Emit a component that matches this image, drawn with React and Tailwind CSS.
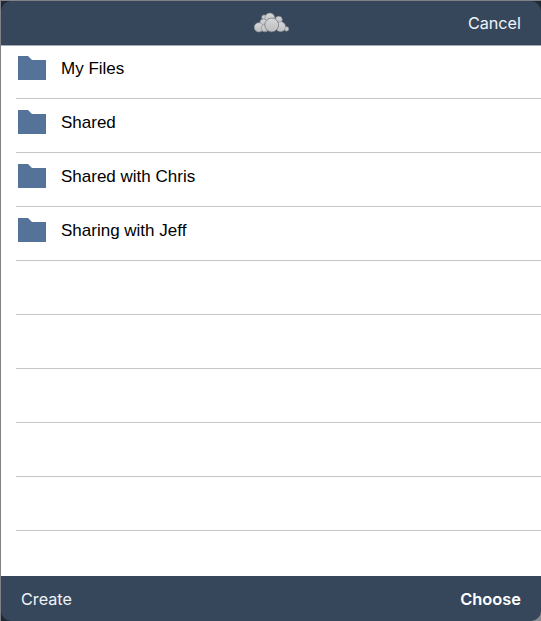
const folders = ['My Files', 'Shared', 'Shared with Chris', 'Sharing with Jeff'];
const emptyRows = [1, 2, 3, 4, 5];

function CloudLogo() {
  return (
    <svg width="35" height="22" viewBox="0.3 0 35.4 22" className="block">
      <defs>
        <linearGradient id="cloud" x1="0" y1="0" x2="0" y2="1">
          <stop offset="0" stopColor="#d6d7d9" />
          <stop offset="1" stopColor="#bbbdc0" />
        </linearGradient>
      </defs>
      <g fill="url(#cloud)" stroke="#85888d" strokeWidth="0.6">
        <circle cx="10.5" cy="5.2" r="2.4" />
        <circle cx="25.3" cy="7.8" r="3.6" />
        <circle cx="33.2" cy="17" r="2.3" />
        <circle cx="16.3" cy="6" r="5" />
        <circle cx="10" cy="10.8" r="3.8" />
        <circle cx="5.2" cy="15.4" r="4.7" />
        <circle cx="27.2" cy="14.8" r="5" />
        <circle cx="11.3" cy="16.2" r="3.7" />
        <circle cx="18.2" cy="13" r="7" stroke="#777a80" strokeWidth="0.8" />
      </g>
    </svg>
  );
}

function FolderIcon() {
  return (
    <svg width="28" height="24" viewBox="0 0 28 24" className="block shrink-0">
      <path d="M0 0h10l4 4h14v20H0z" fill="#557299" />
    </svg>
  );
}

function FolderRow({ name }) {
  return (
    <li className="flex h-[54px] items-start border-b border-[#c5c5c8] pl-0.5 pt-[11px] first:h-[53px] first:pt-2.5">
      <FolderIcon />
      <span className="ml-[15px] pt-px text-[17px] leading-6 text-black">{name}</span>
    </li>
  );
}

export default function App() {
  return (
    <div className="h-[621px] w-[541px] bg-[#1d2835] bg-[linear-gradient(135deg,transparent_99.1%,#8b8d90_99.2%)] font-['Liberation_Sans',sans-serif]">
      <div className="flex h-full flex-col border-l border-t border-[#808286]">
        <header className="grid h-11 shrink-0 grid-cols-3 items-center rounded-t-[10px] bg-[#37475b] pr-5">
          <span />
          <div className="flex justify-center pl-[21px]">
            <CloudLogo />
          </div>
          <button className="justify-self-end font-['Inter',sans-serif] text-[16.2px] leading-6 text-[#eef3fa]">
            Cancel
          </button>
        </header>
        <ul className="min-h-0 flex-1 overflow-hidden border-t border-[#a3a9b5] bg-white pl-[15px]">
          {folders.map((name) => (
            <FolderRow key={name} name={name} />
          ))}
          {emptyRows.map((n) => (
            <li key={n} className="h-[54px] border-b border-[#c5c5c8]" />
          ))}
        </ul>
        <footer className="flex h-[45px] shrink-0 items-center justify-between rounded-b-[10px] bg-[#37475b] px-5 font-['Inter',sans-serif] text-[16.2px] leading-6 text-[#eef3fa]">
          <button>Create</button>
          <button className="text-[16.4px] font-semibold text-white">Choose</button>
        </footer>
      </div>
    </div>
  );
}
